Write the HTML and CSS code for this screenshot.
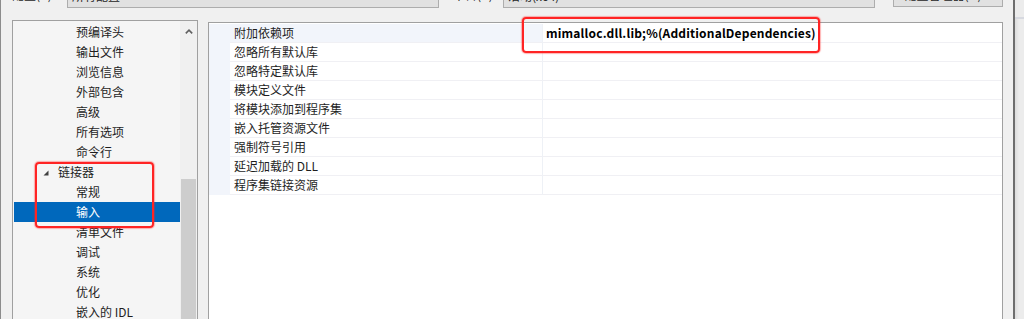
FILE: index.html
```html
<!DOCTYPE html>
<html lang="zh-CN">
  <head>
    <meta charset="UTF-8" />
    <meta name="viewport" content="width=device-width, initial-scale=1.0" />
    <title>属性页</title>
    <link rel="stylesheet" href="styles.css">
  </head>
  <body>
    <div class="dialog">
      <div class="toolbar">
        <span class="label">配置(C):</span>
        <div class="combo">所有配置</div>
        <span class="label platform-label">平台(P):</span>
        <div class="combo">活动(x64)</div>
        <div class="button">配置管理器(O)...</div>
      </div>

      <div class="panes">
        <div class="tree">
          <ul class="tree-list">
            <li class="tree-item">预编译头</li>
            <li class="tree-item">输出文件</li>
            <li class="tree-item">浏览信息</li>
            <li class="tree-item">外部包含</li>
            <li class="tree-item">高级</li>
            <li class="tree-item">所有选项</li>
            <li class="tree-item">命令行</li>
            <li class="tree-item parent">
              <svg class="expander" viewBox="0 0 6 6">
                <polygon points="5.5,0.5 5.5,5.5 0.5,5.5" fill="#404040"></polygon>
              </svg>
              链接器
            </li>
            <li class="tree-item">常规</li>
            <li class="tree-item selected">输入</li>
            <li class="tree-item">清单文件</li>
            <li class="tree-item">调试</li>
            <li class="tree-item">系统</li>
            <li class="tree-item">优化</li>
            <li class="tree-item">嵌入的 IDL</li>
          </ul>
          <div class="scrollbar">
            <div class="scroll-arrow">
              <svg viewBox="0 0 8 5" width="8" height="5">
                <polyline points="0.8,4.4 4,1.2 7.2,4.4" fill="none" stroke="#606060" stroke-width="1.6"></polyline>
              </svg>
            </div>
            <div class="scroll-thumb"></div>
          </div>
        </div>

        <div class="grid">
          <div class="grid-row focused">
            <div class="cell-margin"></div>
            <div class="cell-name">附加依赖项</div>
            <div class="cell-value">mimalloc.dll.lib;%(AdditionalDependencies)</div>
          </div>
          <div class="grid-row">
            <div class="cell-margin"></div>
            <div class="cell-name">忽略所有默认库</div>
            <div class="cell-value"></div>
          </div>
          <div class="grid-row">
            <div class="cell-margin"></div>
            <div class="cell-name">忽略特定默认库</div>
            <div class="cell-value"></div>
          </div>
          <div class="grid-row">
            <div class="cell-margin"></div>
            <div class="cell-name">模块定义文件</div>
            <div class="cell-value"></div>
          </div>
          <div class="grid-row">
            <div class="cell-margin"></div>
            <div class="cell-name">将模块添加到程序集</div>
            <div class="cell-value"></div>
          </div>
          <div class="grid-row">
            <div class="cell-margin"></div>
            <div class="cell-name">嵌入托管资源文件</div>
            <div class="cell-value"></div>
          </div>
          <div class="grid-row">
            <div class="cell-margin"></div>
            <div class="cell-name">强制符号引用</div>
            <div class="cell-value"></div>
          </div>
          <div class="grid-row">
            <div class="cell-margin"></div>
            <div class="cell-name">延迟加载的 DLL</div>
            <div class="cell-value"></div>
          </div>
          <div class="grid-row">
            <div class="cell-margin"></div>
            <div class="cell-name">程序集链接资源</div>
            <div class="cell-value"></div>
          </div>
        </div>
      </div>
    </div>
    <div class="desktop"></div>

    <!-- red annotation frames drawn over the screenshot -->
    <div class="mark mark-tree"></div>
    <div class="mark mark-value"></div>
  </body>
</html>
```

FILE: styles.css
```css
body {
  margin: 0;
  height: 319px;
  overflow: hidden;
  display: flex;
  background-color: #f0f0f0;
  font-family: "Noto Sans CJK SC", "Liberation Sans", sans-serif;
  font-size: 12px;
  color: #1e1e1e;
  position: relative;
}

.dialog {
  width: 1015px;
  box-sizing: border-box;
  border-left: 1px solid #8c8c8c;
  border-right: 2px solid #6e6e6e;
  background: #f0f0f0;
  display: flex;
  flex-direction: column;
}

.desktop {
  flex: 1;
  background: linear-gradient(to right, #dcdcdc, #ececec 4px);
  border-top: 17px solid #ececec;
  box-shadow: inset 0 2px 0 #d7d9e0;
}

/* top bar, mostly scrolled out of view */
.toolbar {
  height: 22px;
  margin-top: -14px;
  padding-left: 11px;
  display: flex;
  align-items: flex-start;
}

.label {
  width: 55px;
  line-height: 17px;
  flex-shrink: 0;
}

.platform-label {
  width: 50px;
  margin-left: 14px;
}

.combo {
  width: 372px;
  height: 22px;
  box-sizing: border-box;
  border: 1px solid #adadad;
  background: #e1e1e1;
  padding-left: 4px;
  line-height: 17px;
  flex-shrink: 0;
}

.button {
  width: 110px;
  height: 21px;
  margin-left: 18px;
  box-sizing: border-box;
  border: 1px solid #adadad;
  background: #e1e1e1;
  text-align: center;
  line-height: 16px;
  flex-shrink: 0;
}

.panes {
  display: flex;
  align-items: flex-start;
  padding-left: 11px;
  margin-top: 12px;
}

/* left category tree */
.tree {
  width: 186px;
  height: 299px;
  box-sizing: border-box;
  border: 1px solid #a0a0a0;
  border-bottom: 0;
  background: #f5f5f5;
  display: flex;
  overflow: hidden;
}

.tree-list {
  list-style: none;
  margin: 0;
  padding: 1px 0 0 1px;
  width: 167px;
  box-sizing: border-box;
}

.tree-item {
  height: 20px;
  line-height: 20px;
  padding-left: 62px;
  white-space: nowrap;
}

.tree-item.parent {
  padding-left: 29px;
  display: flex;
  align-items: center;
}

.expander {
  width: 6px;
  height: 6px;
  margin-right: 9px;
  margin-top: 1px;
}

.tree-item.selected {
  background: #0068bc;
  color: #fff;
}

.scrollbar {
  width: 17px;
  background: #f0f0f0;
  display: flex;
  flex-direction: column;
  align-items: center;
}

.scroll-arrow {
  height: 17px;
  display: flex;
  align-items: center;
  justify-content: center;
  padding-top: 2px;
}

.scroll-thumb {
  width: 15px;
  flex: 1;
  margin-top: 139px;
  background: #cdcdcd;
}

/* property grid */
.grid {
  width: 795px;
  height: 297px;
  margin-left: 10px;
  margin-top: 2px;
  box-sizing: border-box;
  border: 1px solid #a0a0a0;
  border-bottom: 0;
  background: #fff;
  padding-top: 1px;
}

.grid-row {
  display: flex;
  height: 19px;
}

.cell-margin {
  width: 21px;
  background: #f2f5fb;
}

.cell-name {
  width: 312px;
  padding-left: 4px;
  box-sizing: border-box;
  line-height: 18px;
  border-bottom: 1px solid #f0f0f4;
  white-space: nowrap;
}

.cell-value {
  flex: 1;
  padding-left: 3px;
  line-height: 18px;
  border-left: 1px solid #eef1f6;
  border-bottom: 1px solid #f0f0f4;
  font-weight: bold;
  letter-spacing: 0.17px;
  color: #000;
  white-space: nowrap;
}

.grid-row.focused .cell-name {
  background: #f2f5fb;
}

/* annotation frames */
.mark {
  position: absolute;
  box-sizing: border-box;
  border: 2px solid #ff2424;
  border-radius: 4px;
  box-shadow: 0 0 1px 1px rgba(255, 40, 40, 0.35);
}

.mark-tree {
  left: 35px;
  top: 162px;
  width: 119px;
  height: 66px;
}

.mark-value {
  left: 522px;
  top: 17px;
  width: 298px;
  height: 36px;
}
```
